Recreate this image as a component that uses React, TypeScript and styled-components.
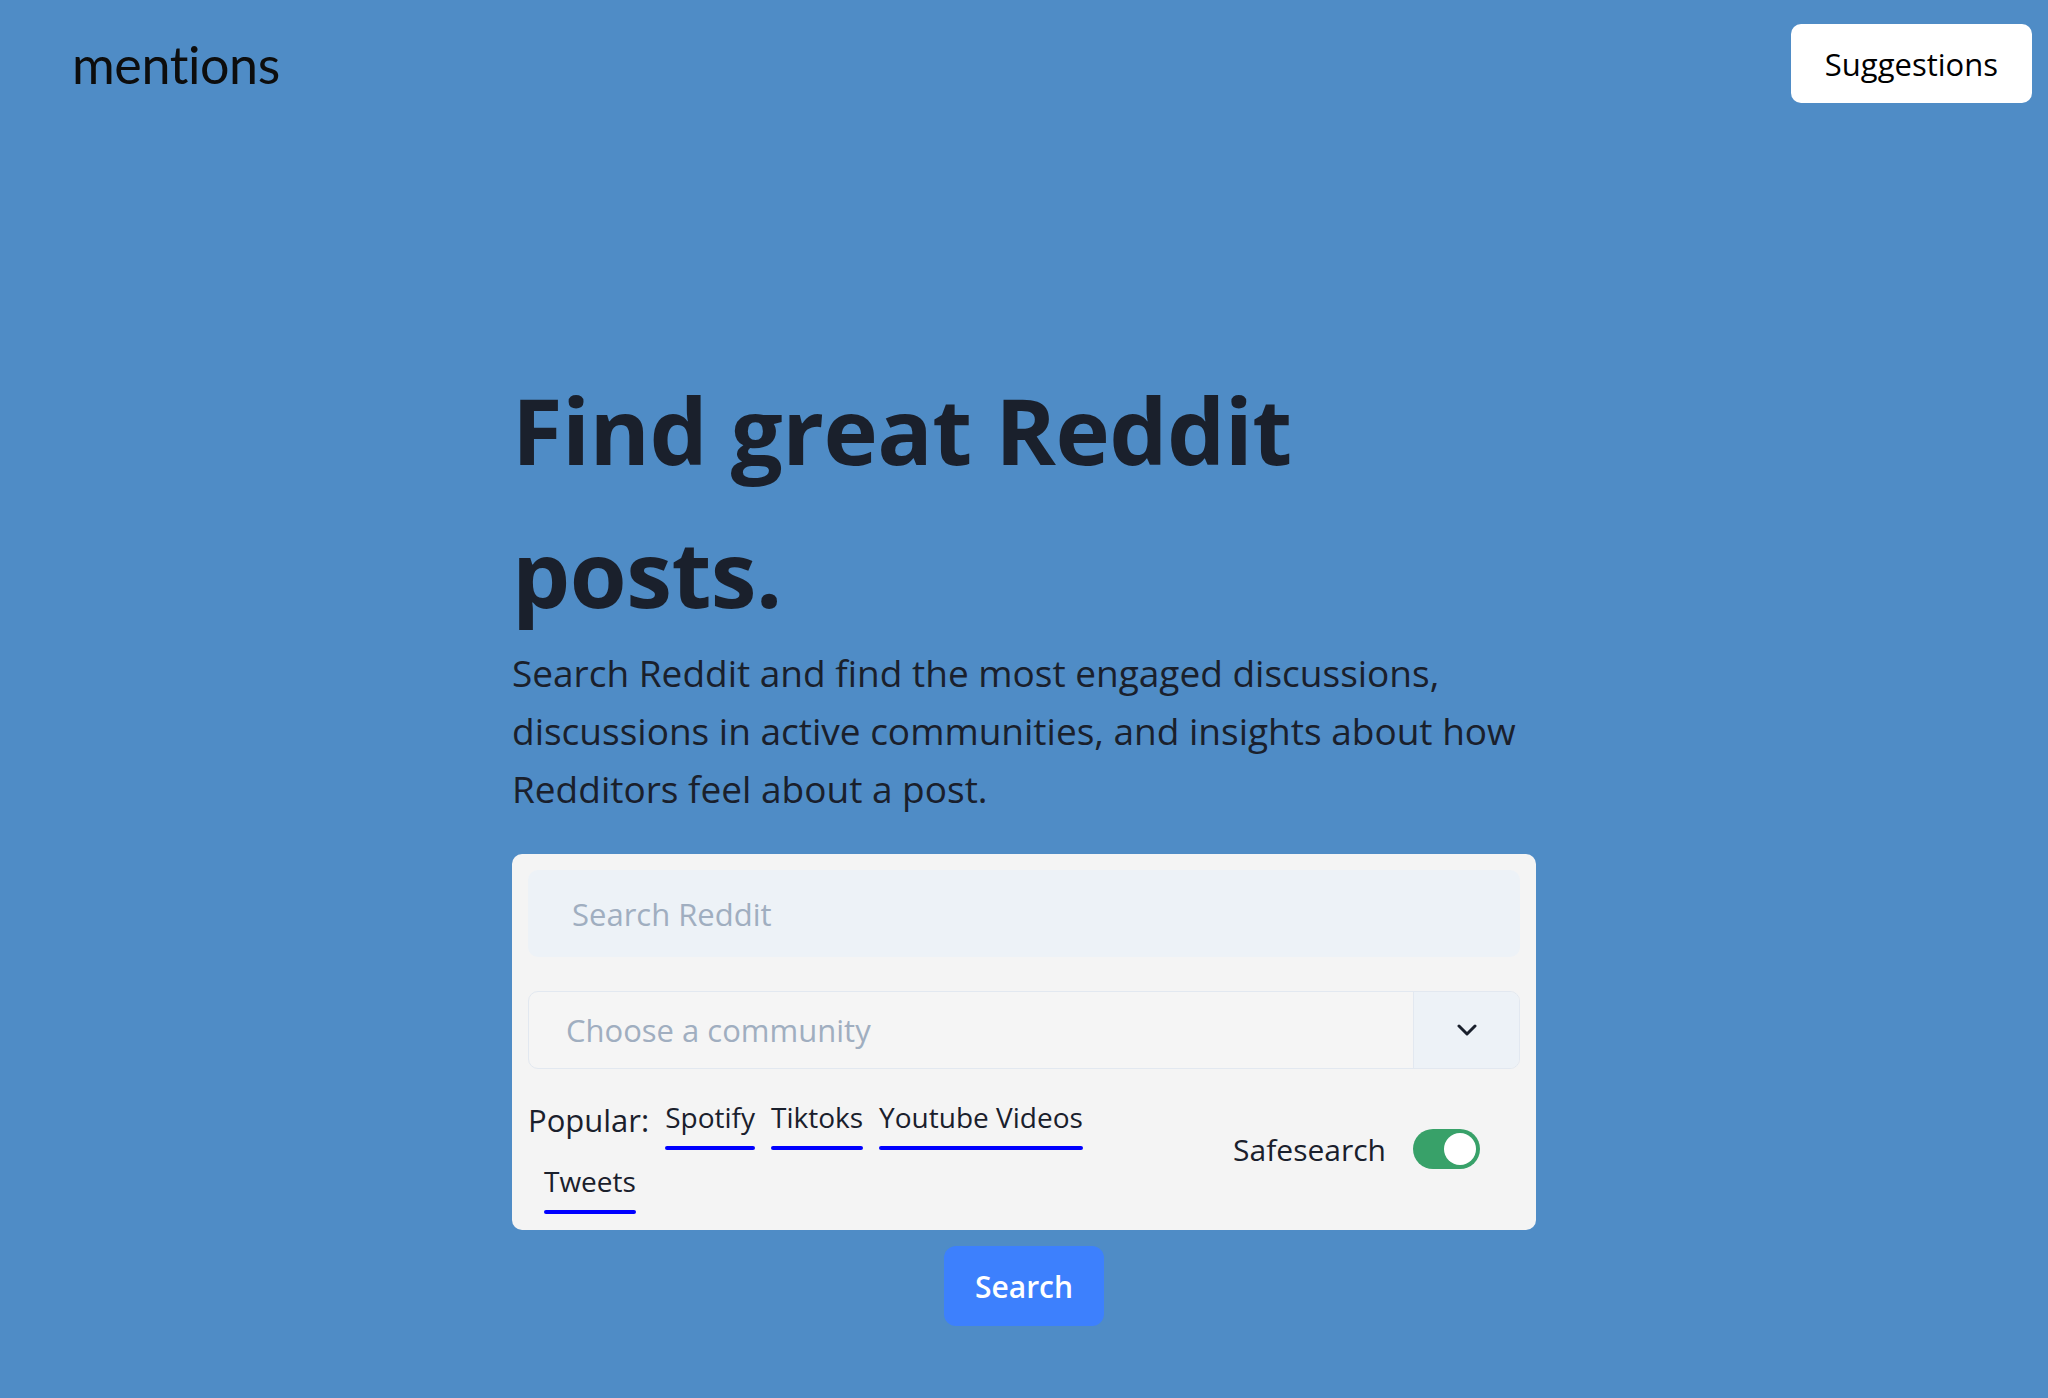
import React from "react";
import styled, { createGlobalStyle } from "styled-components";

const GlobalStyle = createGlobalStyle`
  html, body {
    margin: 0;
    padding: 0;
    background: #4f8cc6;
  }
  body {
    min-height: 100vh;
    font-family: "Open Sans", "Noto Sans", sans-serif;
    color: #1a202c;
  }
  * { box-sizing: border-box; }
`;

const Page = styled.div`
  min-height: 100vh;
  background: #4f8cc6;
`;

const Header = styled.header`
  display: flex;
  justify-content: space-between;
  align-items: flex-start;
  padding: 24px 16px 0 72px;
`;

const Logo = styled.div`
  margin-top: 14px;
  font-family: "Lato", "Open Sans", sans-serif;
  font-size: 52px;
  line-height: 52px;
  letter-spacing: -0.4px;
  color: #0d0d0d;
`;

const SuggestionsButton = styled.button`
  height: 79px;
  padding: 0 34px;
  border: none;
  border-radius: 10px;
  background: #ffffff;
  color: #000;
  font-family: "Open Sans", sans-serif;
  font-size: 31px;
  cursor: pointer;
`;

const Main = styled.main`
  width: 1024px;
  margin: 255px auto 0;
  display: flex;
  flex-direction: column;
`;

const Title = styled.h1`
  margin: 0;
  font-family: "Open Sans", sans-serif;
  font-weight: 700;
  font-size: 92px;
  line-height: 143px;
  color: #1a202c;
  letter-spacing: -0.5px;
`;

const Lead = styled.p`
  margin: 0;
  font-family: "Open Sans", sans-serif;
  font-size: 37px;
  line-height: 58px;
  color: #1a202c;
`;

const Card = styled.section`
  margin-top: 36px;
  padding: 16px;
  background: #f4f4f4;
  border-radius: 10px;
  display: flex;
  flex-direction: column;
`;

const SearchInput = styled.input`
  width: 100%;
  height: 87px;
  border: none;
  border-radius: 10px;
  background: #edf2f7;
  padding: 0 44px;
  font-family: "Open Sans", sans-serif;
  font-size: 31px;
  color: #1a202c;
  outline: none;
  &::placeholder {
    color: #a0aec0;
  }
`;

const SelectGroup = styled.div`
  margin-top: 34px;
  display: flex;
  height: 78px;
  border: 1px solid #e2e8f0;
  border-radius: 10px;
  overflow: hidden;
  background: #f5f5f5;
`;

const SelectField = styled.div`
  flex: 1;
  display: flex;
  align-items: center;
  padding-left: 37px;
  font-size: 31px;
  color: #a0aec0;
`;

const SelectAddon = styled.div`
  width: 106px;
  display: flex;
  align-items: center;
  justify-content: center;
  background: #edf2f7;
  border-left: 1px solid #e2e8f0;
`;

const FilterRow = styled.div`
  margin-top: 27px;
  display: flex;
  align-items: center;
  justify-content: space-between;
`;

const PopularList = styled.div`
  width: 600px;
  display: flex;
  flex-wrap: wrap;
  align-items: flex-start;
  row-gap: 10px;
`;

const PopularLabel = styled.span`
  margin-top: 2px;
  font-size: 31px;
  line-height: 45px;
  color: #1a202c;
`;

const PopularLink = styled.a`
  display: inline-flex;
  flex-direction: column;
  margin-left: 16px;
  font-size: 28px;
  line-height: 42px;
  color: #1a202c;
  text-decoration: none;
  cursor: pointer;
  &::after {
    content: "";
    display: block;
    height: 4px;
    margin-top: 8px;
    border-radius: 4px;
    background: #0000ff;
  }
`;

const SafeSearch = styled.label`
  display: flex;
  align-items: center;
  gap: 27px;
  padding-right: 40px;
  margin-bottom: 12px;
  font-size: 30px;
  line-height: 45px;
  color: #1a202c;
`;

const Toggle = styled.button<{ $on: boolean }>`
  width: 67px;
  height: 40px;
  padding: 4px;
  border: none;
  border-radius: 20px;
  background: ${(p) => (p.$on ? "#38a169" : "#cbd5e0")};
  display: flex;
  align-items: center;
  justify-content: ${(p) => (p.$on ? "flex-end" : "flex-start")};
  cursor: pointer;
`;

const Knob = styled.span`
  width: 32px;
  height: 32px;
  border-radius: 50%;
  background: #ffffff;
`;

const SearchButton = styled.button`
  margin: 16px auto 0;
  width: 160px;
  height: 80px;
  border: none;
  border-radius: 12px;
  background: #3d80fd;
  color: #ffffff;
  font-family: "Open Sans", sans-serif;
  font-weight: 600;
  font-size: 30px;
  cursor: pointer;
`;

const Chevron = () => (
  <svg width="20" height="12" viewBox="0 0 20 12" fill="none">
    <path
      d="M2 2 L10 10 L18 2"
      stroke="#1a202c"
      strokeWidth="3"
      strokeLinecap="round"
      strokeLinejoin="round"
    />
  </svg>
);

const popular = ["Spotify", "Tiktoks", "Youtube Videos", "Tweets"];

export default function App() {
  const [safe, setSafe] = React.useState(true);
  return (
    <Page>
      <GlobalStyle />
      <Header>
        <Logo>mentions</Logo>
        <SuggestionsButton>Suggestions</SuggestionsButton>
      </Header>
      <Main>
        <Title>Find great Reddit posts.</Title>
        <Lead>
          Search Reddit and find the most engaged discussions, discussions in
          active communities, and insights about how Redditors feel about a
          post.
        </Lead>
        <Card>
          <SearchInput placeholder="Search Reddit" />
          <SelectGroup>
            <SelectField>Choose a community</SelectField>
            <SelectAddon>
              <Chevron />
            </SelectAddon>
          </SelectGroup>
          <FilterRow>
            <PopularList>
              <PopularLabel>Popular:</PopularLabel>
              {popular.map((p) => (
                <PopularLink key={p}>{p}</PopularLink>
              ))}
            </PopularList>
            <SafeSearch>
              Safesearch
              <Toggle
                type="button"
                role="switch"
                aria-checked={safe}
                $on={safe}
                onClick={() => setSafe(!safe)}
              >
                <Knob />
              </Toggle>
            </SafeSearch>
          </FilterRow>
        </Card>
        <SearchButton>Search</SearchButton>
      </Main>
    </Page>
  );
}
